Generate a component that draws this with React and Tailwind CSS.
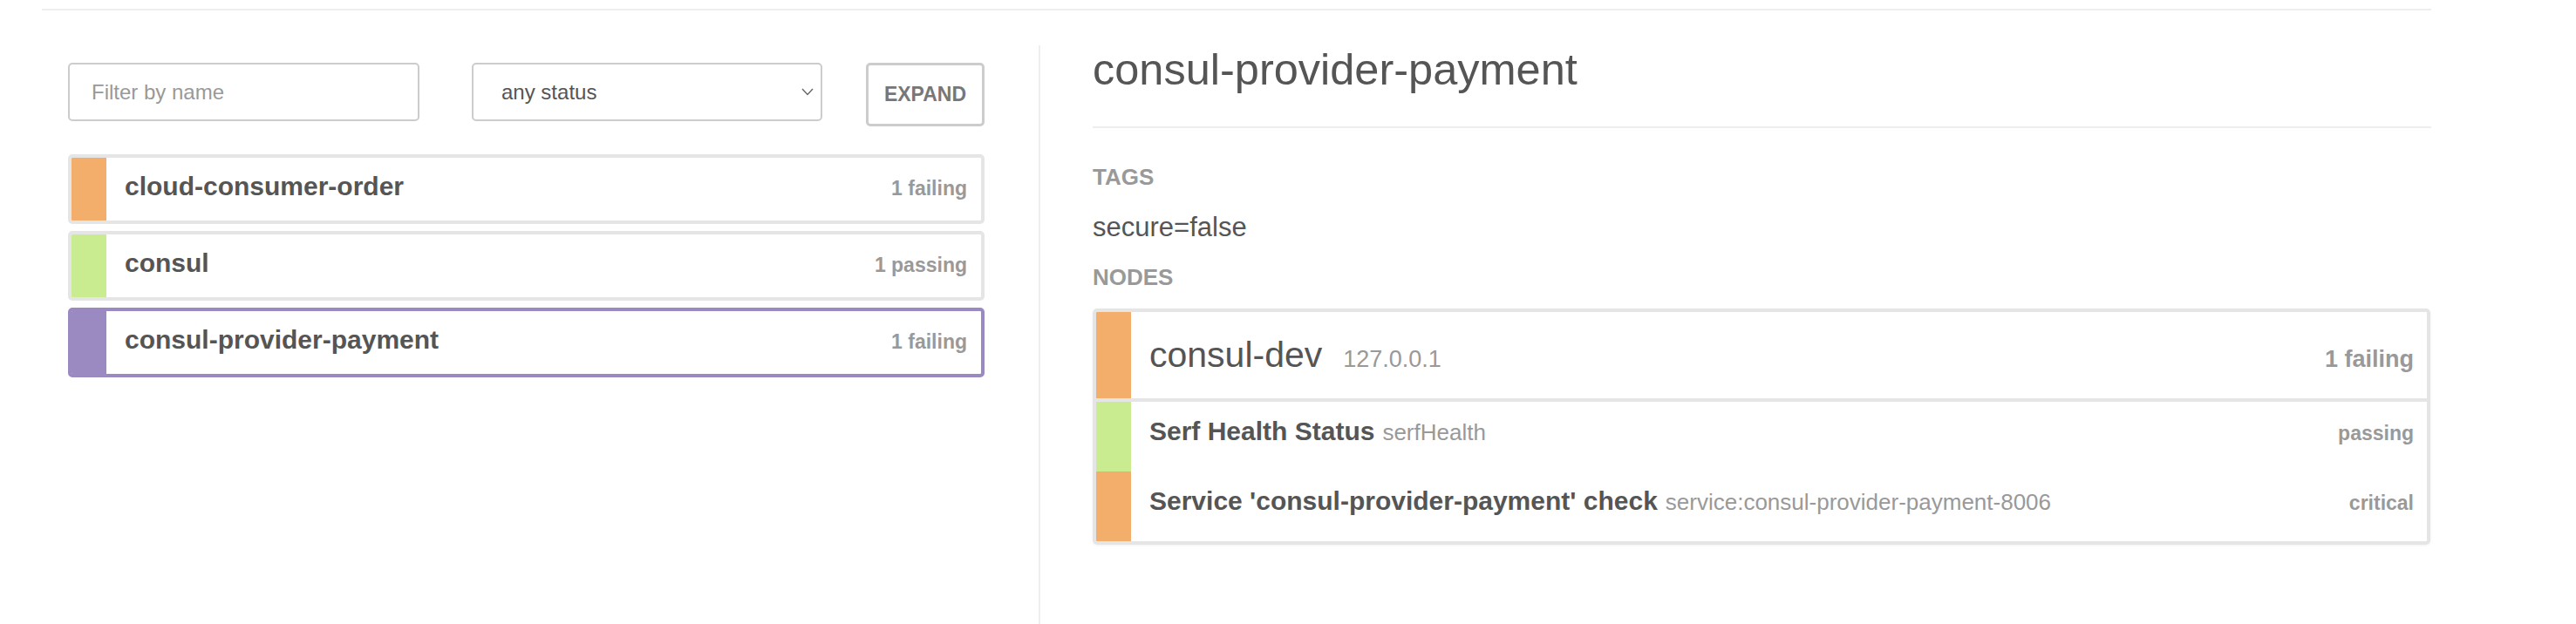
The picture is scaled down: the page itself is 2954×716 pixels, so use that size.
import React from "react";

const ORANGE = "bg-[#f4ae6b]";
const GREEN = "bg-[#c9ec90]";
const PURPLE = "bg-[#9b89c1]";

const services = [
  { name: "cloud-consumer-order", status: "1 failing", bar: ORANGE },
  { name: "consul", status: "1 passing", bar: GREEN },
  { name: "consul-provider-payment", status: "1 failing", bar: PURPLE, active: true },
];

const checks = [
  { name: "Serf Health Status", id: "serfHealth", status: "passing", bar: GREEN },
  {
    name: "Service 'consul-provider-payment' check",
    id: "service:consul-provider-payment-8006",
    status: "critical",
    bar: ORANGE,
  },
];

const ServiceRow = ({ s }) => (
  <div
    className={
      "flex h-[80px] items-center overflow-hidden rounded-[5px] border-4 " +
      (s.active ? "border-[#9b89c1]" : "border-[#e5e5e5]")
    }
  >
    <div className={"w-[40px] self-stretch " + s.bar} />
    <div className="flex flex-1 items-baseline pb-[3px] pl-[21px] pr-[16px]">
      <span className="text-[30px] font-bold leading-[34px] text-[#555]">{s.name}</span>
      <span className="ml-auto text-[23px] font-bold text-[#999]">{s.status}</span>
    </div>
  </div>
);

const CheckRow = ({ c }) => (
  <div className="flex h-[80px] items-center">
    <div className={"w-[40px] self-stretch " + c.bar} />
    <div className="flex flex-1 items-baseline pb-[10px] pl-[21px] pr-[15px]">
      <span className="text-[30px] font-bold leading-[34px] text-[#555]">{c.name}</span>
      <span className="ml-[9px] text-[26px] text-[#999]">{c.id}</span>
      <span className="ml-auto text-[23px] font-bold text-[#999]">{c.status}</span>
    </div>
  </div>
);

export default function App() {
  return (
    <div className="min-h-[716px] w-[2954px] bg-white font-['Liberation_Sans',Arial,sans-serif] text-[#555]">
      <div className="ml-[48px] w-[2740px]">
        <div className="mt-[10px] h-[2px] bg-[#eeeeee]" />
        <div className="mt-[40px] flex min-h-[664px]">
          {/* services list */}
          <div className="w-[1143px] pl-[30px] pr-[62px] pt-[20px]">
            <div className="flex items-start">
              <input
                placeholder="Filter by name"
                className="h-[67px] w-[403px] rounded-[5px] border-2 border-[#cccccc] px-[25px] text-[24px] text-[#555] outline-none placeholder:text-[#999]"
              />
              <div className="ml-[60px] flex h-[67px] w-[402px] items-center rounded-[5px] border-2 border-[#cccccc] pl-[32px] pr-[8px]">
                <span className="text-[24px] text-[#555]">any status</span>
                <svg className="ml-auto" width="14" height="9" viewBox="0 0 14 9" fill="none">
                  <polyline points="1,1 7,7.5 13,1" stroke="#666" strokeWidth="1.4" />
                </svg>
              </div>
              <button className="ml-[50px] h-[73px] w-[136px] rounded-[5px] border-[3px] border-[#cccccc] bg-white text-[23px] font-bold text-[#777]">
                EXPAND
              </button>
            </div>
            <div className="mt-[32px] flex flex-col gap-[8px]">
              {services.map((s) => (
                <ServiceRow key={s.name} s={s} />
              ))}
            </div>
          </div>

          <div className="w-[2px] bg-[#eeeeee]" />

          {/* service detail */}
          <div className="flex-1 pl-[60px]">
            <h1 className="text-[50.5px] font-normal leading-[56px] text-[#555]">consul-provider-payment</h1>
            <div className="mt-[37px] h-[2px] bg-[#eeeeee]" />
            <div className="mt-[41px] text-[26px] font-bold leading-[30px] text-[#999]">TAGS</div>
            <div className="mt-[26px] text-[31px] leading-[34px] text-[#555]">secure=false</div>
            <div className="mt-[25px] text-[26px] font-bold leading-[30px] text-[#999]">NODES</div>
            <div className="mr-[1px] mt-[21px] overflow-hidden rounded-[5px] border-4 border-[#e5e5e5] shadow-[0_1px_3px_rgba(0,0,0,0.06)]">
              <div className="flex h-[103px] items-center border-b-4 border-[#e5e5e5]">
                <div className={"w-[40px] self-stretch " + ORANGE} />
                <div className="flex flex-1 items-baseline pl-[21px] pr-[15px]">
                  <span className="text-[41px] text-[#555]">consul-dev</span>
                  <span className="ml-[24px] text-[27px] text-[#999]">127.0.0.1</span>
                  <span className="ml-auto text-[27px] font-bold text-[#999]">1 failing</span>
                </div>
              </div>
              {checks.map((c) => (
                <CheckRow key={c.id} c={c} />
              ))}
            </div>
          </div>
        </div>
      </div>
    </div>
  );
}
